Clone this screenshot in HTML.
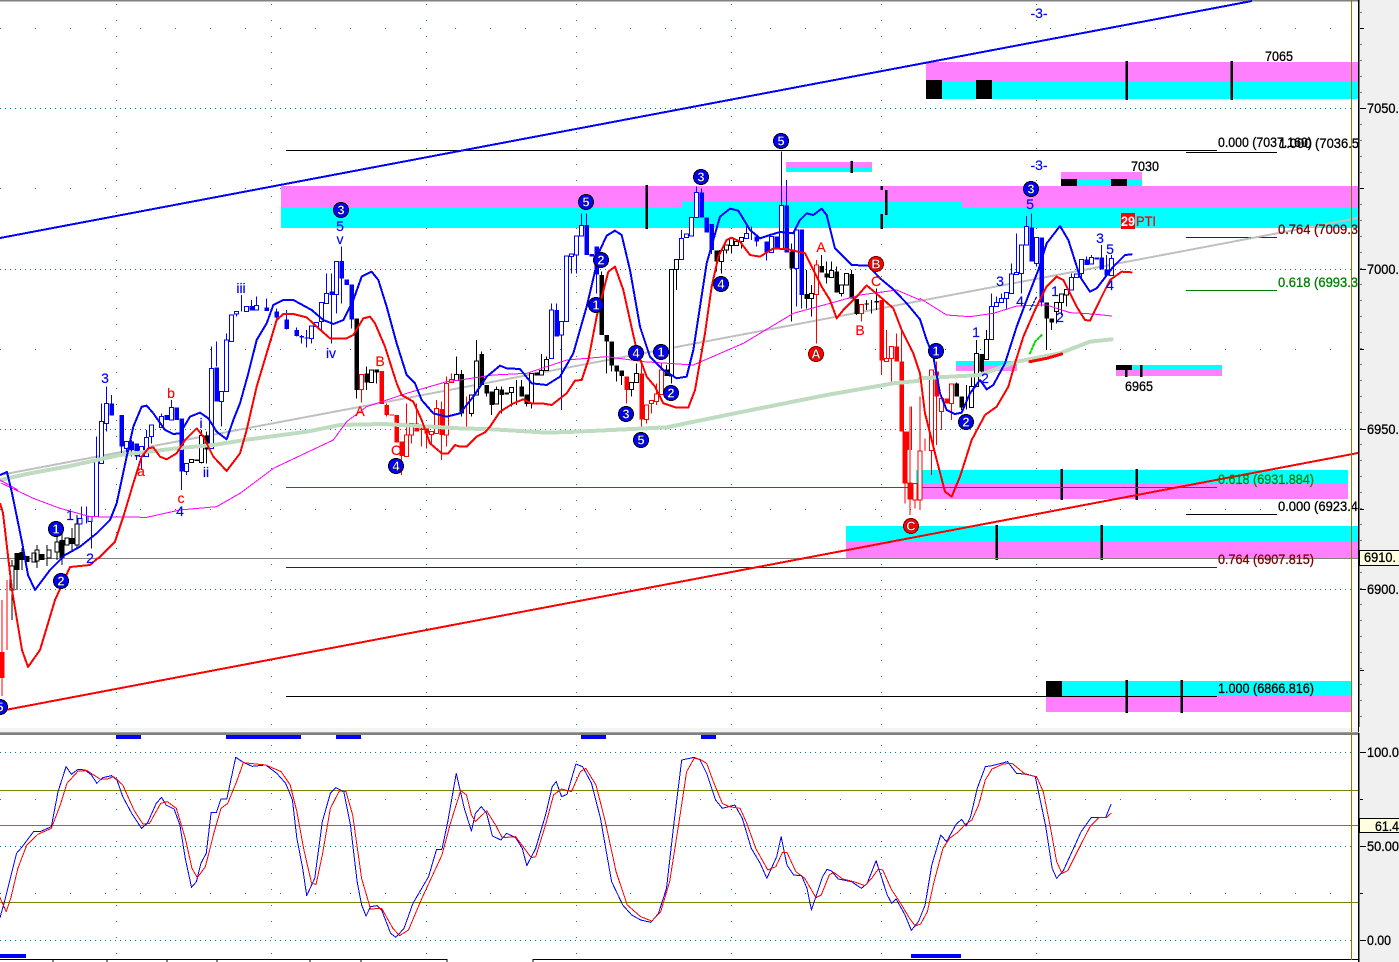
<!DOCTYPE html>
<html><head><meta charset="utf-8"><title>Chart</title>
<style>
html,body{margin:0;padding:0;background:#fff;width:1399px;height:962px;overflow:hidden}
svg{display:block}
text{font-family:"Liberation Sans",sans-serif;font-size:14px}
.k{fill:#000;stroke:#000;stroke-width:.3}
.b{fill:#0000ff;text-anchor:middle;stroke:#0000ff;stroke-width:.15}
.r{fill:#ff0000;text-anchor:middle;stroke:#ff0000;stroke-width:.15}
.cb circle{fill:#0000ff;stroke:#000;stroke-width:1}
.cr circle{fill:#ff0000;stroke:#800000;stroke-width:1}
.cb text,.cr text{fill:#fff;text-anchor:middle;font-weight:bold;font-size:13px;stroke:#000;stroke-width:.35}
.w{fill:none;stroke-width:3}
.f{fill:none;stroke-width:14}
.h{fill:#fff;stroke-width:3}
.c{fill:none;stroke-linejoin:round;stroke-linecap:round;vector-effect:non-scaling-stroke}
</style></head><body>
<svg width="1399" height="962" viewBox="0 0 1399 962" xmlns="http://www.w3.org/2000/svg" shape-rendering="crispEdges">
<rect width="1399" height="962" fill="#fff"/>
<rect width="1399" height="1.5" fill="#808080"/>
<!-- grid -->
<g stroke="#008080" stroke-width="1" fill="none">
<path stroke-dasharray="1 4" d="M0 108.5H1351M0 269.5H1351M0 429.5H1351M0 589.5H1351M0 752.5H1351M0 846.5H1351M0 940.5H1351"/>
<path stroke-dasharray="1 34" d="M0 349.5H1351M0 509.5H1351M0 799.5H1351M0 893.5H1351M0 28.5H1351M0 188.5H1351"/>
<path stroke-dasharray="1 15" d="M116.5 4V730M271.5 4V730M426.5 4V730M576.5 4V730M731.5 4V730M881.5 4V730M1036.5 4V730M116.5 745V958M271.5 745V958M426.5 745V958M576.5 745V958M731.5 745V958M881.5 745V958M1036.5 745V958"/>
</g>
<!-- zones -->
<g>
<rect x="926" y="62" width="432" height="19" fill="#ff80ff"/><rect x="926" y="81" width="432" height="18" fill="#00ffff"/>
<rect x="926" y="80" width="16" height="19" fill="#000"/><rect x="976" y="80" width="16" height="19" fill="#000"/>
<rect x="281" y="186" width="1077" height="42" fill="#00ffff"/>
<rect x="281" y="186" width="401" height="21" fill="#ff80ff"/><rect x="682" y="186" width="280" height="16" fill="#ff80ff"/><rect x="962" y="186" width="396" height="21" fill="#ff80ff"/>
<rect x="786" y="162" width="86" height="5" fill="#ff80ff"/><rect x="786" y="167" width="86" height="5" fill="#00ffff"/>
<rect x="1061" y="172" width="81" height="7" fill="#ff80ff"/><rect x="1061" y="179" width="81" height="7" fill="#00ffff"/>
<rect x="1061" y="179" width="16" height="7" fill="#000"/><rect x="1111" y="179" width="16" height="7" fill="#000"/>
<rect x="956" y="361" width="61" height="5" fill="#00ffff"/><rect x="956" y="366" width="61" height="5" fill="#ff80ff"/>
<rect x="1116" y="365" width="106" height="5" fill="#00ffff"/><rect x="1116" y="370" width="106" height="6" fill="#ff80ff"/><rect x="1116" y="365" width="16" height="5" fill="#000"/>
<rect x="916" y="470" width="432" height="14" fill="#00ffff"/><rect x="916" y="484" width="432" height="15" fill="#ff80ff"/>
<rect x="846" y="526" width="512" height="16" fill="#00ffff"/><rect x="846" y="542" width="512" height="16" fill="#ff80ff"/>
<rect x="1046" y="681" width="305" height="15" fill="#00ffff"/><rect x="1046" y="696" width="305" height="16" fill="#ff80ff"/><rect x="1046" y="681" width="16" height="15" fill="#000"/>
<path stroke="#000" stroke-width="2.500" fill="none" d="M1126.500 61V100M1231.500 61V100M646.500 185V229M881.500 186V190M881.500 214V229M886 190V215M851.500 161V173M1126 365V377M1141 365V377M1061.500 469V500M1136.500 469V500M996.500 525V560M1101.500 525V560M1126.500 680V713M1181.500 680V713"/>
</g>
<!-- horizontal fib lines -->
<g fill="none" stroke-width="1">
<path stroke="#000" d="M286 150.500H1217M1186 152.500H1277M1186 514.500H1277M286 696.500H1217"/>
<path stroke="#800000" d="M1186 237.500H1277M286 567.500H1217"/>
<path stroke="#008000" d="M1186 290.500H1277M286 487.500H1217"/>
<path stroke="#808080" d="M0 558.500H1358"/>
</g>
<!-- channels -->
<path d="M0 238L1252 1" stroke="#0000ff" stroke-width="2" fill="none"/>
<path d="M0 711L1358 453" stroke="#ff0000" stroke-width="2" fill="none"/>
<path d="M0 475L1358 218" stroke="#c0c0c0" stroke-width="2" fill="none"/>
<!-- far-left candles -->
<g>
<path stroke="#000" stroke-width="1" fill="none" d="M12 560V620M22 548V570M37 545V568M47 545V566M57 535V560M62 530V565M72 528V550M77 515V548M17 555V590"/>
<path stroke="#ff0000" stroke-width="1" fill="none" d="M2 600V696M7 580V650"/>
<path stroke="#ff0000" stroke-width="5" fill="none" d="M2 652V678"/>
<path stroke="#000" stroke-width="5" fill="none" d="M17 553V570M22 552V560M27 556V562M42 554V560M62 540V558M72 538V544"/>
<path stroke="#000" stroke-width="1" fill="#fff" d="M10 566h4V590h-4zM32 553h4V562h-4zM35 550h4V561h-4zM47 550h4V558h-4zM55 542h4V552h-4zM65 538h4V545h-4zM75 524h4V545h-4z"/>
</g>
<!-- candles zoom1 -->
<g transform="translate(0 240) scale(.33333)">
<path class="w" stroke="#0000ff" d="M245 800V835M260 800V850M275 845V925M290 590V665M305 490V590M320 440V575M335 465V490M365 620V650M380 625V650M395 600V650M410 650V660M425 650V690M440 570V592M455 590V610M485 520V530M515 480V502M545 695V750M560 695V705M635 320V385M650 305V380M665 485V560M680 280V300M710 230V220M725 165V215M755 180V198M770 170V197M800 175V203M830 205V235M860 210V268M890 262V290M905 285V310M920 270V322M935 295V310M965 230V270M980 100V160M995 100V310M1010 163V220M1025 20V65M1025 115V190M1055 238V265"/>
<path class="f" stroke="#0000ff" d="M335 490V527M365 525V620M395 605V630M410 610V650M500 525V540M530 502V540M545 535V695M650 382V485M755 198V212M800 203V213M830 215V232M860 238V267M890 270V288M905 288V293M920 292V296M995 155V165M1025 63V115M1040 118V135M1055 133V238"/>
<path class="h" stroke="#0000ff" d="M234 835h12V852H234zM264 830h12V845H264zM284 665h12V830H284zM299 545h12V670H299zM314 490h12V550H314zM374 605h12V625H374zM434 592h12V650H434zM419 620h12V650H419zM449 555h12V590H449zM479 530h12V562H479zM509 502h12V540H509zM554 670h12V695H554zM629 385h12V625H629zM659 455h12V485H659zM674 300h12V455H674zM689 225h12V305H689zM704 215h12V222H704zM734 200h12V215H734zM764 197h12V210H764zM929 258h12V295H929zM944 248h12V260H944zM959 187h12V245H959zM974 160h12V190H974zM1004 65h12V163H1004z"/>
<path class="w" stroke="#000" d="M605 570V670M620 575V670M1070 450V475M1100 380V450M1130 388V430M1370 350V403"/>
<path class="f" stroke="#000" d="M590 658V663M620 587V628M1070 235V450M1100 400V428M1130 388V398"/>
<path class="h" stroke="#000" d="M569 658h12V668H569zM599 587h12V667H599zM1109 390h12V428H1109zM1364 403h12V422H1364z"/>
<path class="w" stroke="#f00" d="M1085 448V488M1160 490V530M1205 648V705M1220 490V585M1235 585V610M1250 490V550M1265 560V620M1280 580V625M1295 583V610M1310 480V505M1325 485V660M1340 585V620M1340 410V430M1355 400V418"/>
<path class="f" stroke="#f00" d="M1145 393V492M1160 495V525M1175 523V527M1190 525V607M1205 605V648M1250 550V575M1265 565V570M1280 565V580M1325 507V585"/>
<path class="h" stroke="#f00" d="M1079 403h12V448H1079zM1214 585h12V650H1214zM1229 550h12V585H1229zM1289 575h12V583H1289zM1304 505h12V580H1304zM1334 430h12V585H1334zM1349 418h12V428H1349z"/>
</g>
<!-- candles zoom2 -->
<g transform="translate(460 130) scale(.33333)">
<path class="w" stroke="#000" d="M5 720V860M35 850V860M50 630V693M65 665V672M80 790V800M95 825V855M110 770V778M125 770V850M155 787V830M170 750V825M185 750V770M200 822V830M215 820V835M245 672V722M260 680V688M425 425V440M440 635V730M455 707V725M470 725V755M485 738V765M515 778V800M530 700V730M620 705V718M635 738V760M650 418V480M770 395V425M785 395V430M800 360V370M815 347V370M845 335V355M995 415V575M995 340V365M1040 420V535M1055 465V560M1085 375V408M1100 395V460M1115 395V422M1130 410V424M1145 490V500M1175 420V432M1190 552V555M1220 510V540M1235 510V550M1250 475V540"/>
<path class="f" stroke="#000" d="M5 732V850M65 672V765M80 765V790M95 785V825M125 778V795M140 788V793M185 770V800M200 793V822M230 727V737M425 435V615M440 615V635M455 635V707M470 707V725M485 722V738M620 718V738M770 362V395M995 365V415M1040 492V507M1085 408V428M1100 430V442M1130 424V488M1175 432V505M1190 507V552M1220 520V524M1250 513V517"/>
<path class="h" stroke="#000" d="M29 795h12V850H29zM44 693h12V795H44zM104 778h12V822H104zM149 772h12V787H149zM209 730h12V820H209zM239 722h12V735H239zM254 688h12V722H254zM509 757h12V778H509zM524 730h12V757H524zM629 418h12V738H629zM644 388h12V418H644zM779 362h12V395H779zM794 345h12V360H794zM809 325h12V347H809zM824 335h12V347H824zM839 322h12V335H839zM1049 490h12V505H1049zM1109 422h12V442H1109zM1139 465h12V490H1139zM1154 430h12V465H1154z"/>
<path class="w" stroke="#0000ff" d="M275 520V540M290 520V540M305 615V840M320 430V378M335 380V430M350 375V430M365 250V287M380 250V285M410 433V490M665 300V325M710 170V187M725 175V187M755 360V372M860 285V310M875 290V330M890 335V350M920 368V392M965 65V227M980 150V227M1025 495V535M1010 415V530"/>
<path class="f" stroke="#0000ff" d="M290 540V620M380 285V375M395 372V380M410 350V433M725 187V262M740 262V307M755 282V360M890 320V335M920 335V368M950 320V352M980 227V368M1025 298V495"/>
<path class="h" stroke="#0000ff" d="M269 540h12V685H269zM299 575h12V615H299zM314 378h12V575H314zM329 372h12V380H329zM344 318h12V375H344zM359 287h12V318H359zM659 325h12V388H659zM674 312h12V322H674zM689 262h12V318H689zM704 187h12V262H704zM854 310h12V325H854zM929 320h12V368H929zM959 227h12V355H959zM1004 300h12V415H1004z"/>
<path class="w" stroke="#f00" d="M20 800V900M500 780V820M545 690V730M545 868V895M560 868V880M590 760V792M605 700V720M575 820V850M590 815V825M1070 390V405M1070 493V640M1205 550V575M1265 692V735M1280 600V685M1295 685V765M1310 610V650M1325 600V695M1355 830V960"/>
<path class="f" stroke="#f00" d="M500 740V780M545 730V868M1265 510V692M1310 650V695M1325 695V905M1340 905V960"/>
<path class="h" stroke="#f00" d="M554 825h12V868H554zM569 812h12V820H569zM584 792h12V815H584zM599 720h12V793H599zM1064 405h12V493H1064zM1199 524h12V550H1199zM1274 685h12V695H1274zM1289 650h12V685H1289z"/>
</g>
<!-- candles zoom3 -->
<g transform="translate(880 130) scale(.33333)">
<path class="w" stroke="#f00" d="M75 1060V1120M90 830V1060M90 1108V1155M105 1110V1135M120 800V963M120 1110V1140M135 925V963M155 963V1035M170 695V725M170 800V945M185 845V900M215 820V870"/>
<path class="f" stroke="#f00" d="M75 905V1060M90 1057V1108M170 725V800M200 805V820"/>
<path class="h" stroke="#f00" d="M99 1060h12V1110H99zM114 963h12V1110H114zM149 720h12V962H149zM179 805h12V845H179zM209 762h12V820H209z"/>
<path class="w" stroke="#000" d="M230 758V800M245 833V840M260 765V838M275 735V770M290 630V670M305 725V740M320 600V628M500 565V660M515 578V600M530 545V580M545 517V555M560 495V530"/>
<path class="f" stroke="#000" d="M230 760V800M245 800V833M305 672V725M500 518V565M515 565V578"/>
<path class="h" stroke="#000" d="M269 770h12V833H269zM284 670h12V770H284zM314 628h12V688H314zM524 518h12V545H524zM539 492h12V517H539zM554 478h12V495H554z"/>
<path class="w" stroke="#0000ff" d="M335 490V530M350 500V518M365 490V505M380 505V540M395 400V432M410 310V428M425 430V490M440 258V290M455 250V292M470 400V410M485 518V530M575 430V443M605 430V445M620 380V388M635 375V382M665 345V383M680 375V418M695 375V385"/>
<path class="f" stroke="#0000ff" d="M455 292V395M485 322V518M620 388V405M650 383V389M665 383V418M680 418V437"/>
<path class="h" stroke="#0000ff" d="M329 530h12V628H329zM344 518h12V530H344zM359 505h12V518H359zM374 488h12V505H374zM389 432h12V490H389zM404 428h12V433H404zM419 345h12V430H419zM434 290h12V345H434zM464 322h12V400H464zM569 443h12V480H569zM584 432h12V443H584zM599 388h12V430H599zM629 382h12V402H629zM689 385h12V437H689z"/>
</g>
<!-- curves -->
<g fill="none">
<g transform="translate(0 240) scale(.33333)">
<polyline class="c" stroke="#c0dcc0" stroke-width="4" points="0,720 90,700 200,680 360,645 530,625 640,615 735,600 920,575 1020,555 1150,552 1380,565"/>
<polyline class="c" stroke="#ff00ff" stroke-width="1" points="5,730 100,775 180,805 270,830 440,832 540,810 650,800 720,760 820,685 1000,600 1040,545 1100,500 1220,460 1340,425 1380,420"/>
</g>
<g transform="translate(460 130) scale(.33333)">
<polyline class="c" stroke="#c0dcc0" stroke-width="4" points="0,895 100,898 260,908 350,905 620,892 800,855 1100,795 1300,760 1380,752"/>
<polyline class="c" stroke="#ff00ff" stroke-width="1" points="0,750 100,735 200,730 320,690 440,680 550,695 700,705 850,640 1000,550 1110,520 1200,495 1310,480 1380,510"/>
</g>
<g transform="translate(880 130) scale(.33333)">
<polyline class="c" stroke="#c0dcc0" stroke-width="4" points="120,745 300,735 410,695 540,670 630,635 695,628"/>
<polyline class="c" stroke="#ff00ff" stroke-width="1" points="120,505 200,555 270,560 340,550 410,528 500,525 570,548 640,552 695,558"/>
</g>
<path d="M0 480L18 490" stroke="#ff00ff" stroke-width="1"/>
<polyline stroke="#0000ff" stroke-width="2" stroke-linejoin="round" points="0,475 7,472 12,493 22,542 28,575 35,590 50,570 65,555"/>
<polyline stroke="#ff0000" stroke-width="2" stroke-linejoin="round" points="0,503 3,513 12,590 22,650 28,667 40,650 55,600 70,567 90,565 98,558"/>
<g transform="translate(0 240) scale(.33333)">
<polyline class="c" stroke="#0000ff" stroke-width="2" points="195,945 240,920 290,880 330,840 350,790 380,650 400,560 425,500 440,497 460,520 495,570 520,582 540,580 570,530 600,518 625,535 650,575 680,598 700,540 720,490 745,400 770,300 800,250 820,195 850,180 880,180 935,210 970,240 1000,252 1030,240 1060,180 1085,110 1115,95 1135,120 1160,200 1190,310 1220,405 1245,430 1265,480 1300,520 1340,530 1380,520"/>
<polyline class="c" stroke="#ff0000" stroke-width="2" points="295,955 345,905 370,830 400,730 425,650 445,625 460,622 480,650 500,658 530,640 555,600 590,565 610,590 640,650 680,693 720,640 740,570 770,440 800,340 830,240 850,222 880,222 920,232 950,260 990,295 1040,295 1060,285 1090,235 1110,230 1125,250 1155,320 1190,430 1205,465 1240,485 1265,540 1290,610 1325,640 1345,640 1365,615 1380,620"/>
</g>
<g transform="translate(460 130) scale(.33333)">
<polyline class="c" stroke="#0000ff" stroke-width="2" points="0,850 40,800 80,740 120,707 140,715 180,717 215,760 260,765 300,740 340,670 380,530 420,360 440,317 465,302 485,315 510,420 540,590 570,680 610,720 650,745 680,740 700,660 740,400 780,260 810,236 835,242 870,300 900,325 930,315 960,306 1000,310 1020,270 1040,250 1060,255 1085,236 1100,255 1125,355 1175,405 1225,407 1260,445 1300,478 1340,520 1380,568"/>
<polyline class="c" stroke="#ff0000" stroke-width="2" points="0,950 20,950 50,920 75,907 90,890 120,845 160,820 190,808 215,820 245,820 275,825 320,790 345,752 365,750 385,690 410,560 445,425 465,410 490,480 530,660 560,740 585,770 610,820 650,833 685,833 705,780 735,610 755,470 775,380 800,330 815,323 840,335 870,375 900,380 940,355 985,358 1035,370 1050,400 1085,470 1110,510 1130,565 1150,540 1190,500 1220,466 1260,500 1300,535 1325,600 1360,670 1380,730"/>
</g>
<g transform="translate(880 130) scale(.33333)">
<polyline class="c" stroke="#0000ff" stroke-width="2" points="120,568 140,630 160,680 180,790 200,840 225,852 245,848 270,790 300,750 320,778 340,765 375,700 410,590 440,510 475,420 500,340 540,288 565,330 600,440 630,485 650,475 700,410 735,375 755,373"/>
<polyline class="c" stroke="#ff0000" stroke-width="2" points="120,730 135,850 165,970 195,1085 215,1100 240,1040 275,930 315,855 350,830 385,770 405,700 430,620 465,540 500,470 530,440 550,450 590,530 615,570 630,572 660,510 690,450 725,425 755,427"/>
<polyline class="c" stroke="#00e000" stroke-width="2" stroke-dasharray="2 2" points="450,670 465,635 485,615"/>
<polyline class="c" stroke="#ff0000" stroke-width="3" stroke-dasharray="1 1" points="450,695 500,685 545,672"/>
<polyline class="c" stroke="#0000ff" stroke-width="1.500" stroke-dasharray="2 2" points="450,540 470,500"/>
</g>
</g>
<!-- blue circles -->
<g class="cb">
<circle cx="56" cy="529" r="7.500"/><text x="56" y="533.500">1</text>
<circle cx="61" cy="581" r="7.500"/><text x="61" y="585.500">2</text>
<circle cx="341" cy="210" r="7.500"/><text x="341" y="214.500">3</text>
<circle cx="586" cy="202" r="7.500"/><text x="586" y="206.500">5</text>
<circle cx="601" cy="260" r="7.500"/><text x="601" y="264.500">2</text>
<circle cx="596" cy="305" r="7.500"/><text x="596" y="309.500">1</text>
<circle cx="636" cy="353" r="7.500"/><text x="636" y="357.500">4</text>
<circle cx="661" cy="352" r="7.500"/><text x="661" y="356.500">1</text>
<circle cx="626" cy="414" r="7.500"/><text x="626" y="418.500">3</text>
<circle cx="671" cy="393" r="7.500"/><text x="671" y="397.500">2</text>
<circle cx="641" cy="440" r="7.500"/><text x="641" y="444.500">5</text>
<circle cx="701" cy="177" r="7.500"/><text x="701" y="181.500">3</text>
<circle cx="721" cy="284" r="7.500"/><text x="721" y="288.500">4</text>
<circle cx="781" cy="141" r="7.500"/><text x="781" y="145.500">5</text>
<circle cx="396" cy="466" r="7.500"/><text x="396" y="470.500">4</text>
<circle cx="936" cy="351" r="7.500"/><text x="936" y="355.500">1</text>
<circle cx="966" cy="422" r="7.500"/><text x="966" y="426.500">2</text>
<circle cx="1031" cy="189" r="7.500"/><text x="1031" y="193.500">3</text>
<circle cx="0" cy="707" r="7.500"/><text x="0" y="711.500">5</text>
</g>
<g class="cr">
<circle cx="816" cy="354" r="7.500"/><text x="816" y="358.500">A</text>
<circle cx="876" cy="264" r="7.500"/><text x="876" y="268.500">B</text>
<circle cx="911" cy="526" r="7.500"/><text x="911" y="530.500">C</text>
</g>
<!-- wave labels -->
<g class="b">
<text x="1039" y="18">-3-</text><text x="1039" y="170">-3-</text>
<text x="340" y="231">5</text><text x="340" y="244">v</text><text x="241" y="293">iii</text><text x="331" y="358">iv</text>
<text x="206" y="477">ii</text><text x="201" y="428">i</text><text x="105" y="383">3</text><text x="70" y="520">1</text><text x="90" y="563">2</text><text x="180" y="516">4</text>
<text x="976" y="337">1</text><text x="1000" y="286">3</text><text x="1020" y="306">4</text><text x="1030" y="209">5</text><text x="985" y="383">2</text>
<text x="1100" y="243">3</text><text x="1110" y="254">5</text><text x="1110" y="290">4</text><text x="1055" y="296">1</text><text x="1060" y="322">2</text>
</g>
<g class="r">
<text x="141" y="476">a</text><text x="171" y="398">b</text><text x="181" y="503">c</text>
<text x="360" y="416">A</text><text x="380" y="366">B</text><text x="396" y="455">C</text>
<text x="821" y="252">A</text><text x="876" y="286">C</text><text x="860" y="335">B</text>
</g>
<rect x="1121" y="213" width="14" height="16" fill="#ff0000"/>
<text x="1121" y="226" fill="#fff" font-weight="bold" textLength="14" lengthAdjust="spacingAndGlyphs">29</text>
<text x="1136" y="226" fill="#ff0000" stroke="#ff0000" stroke-width=".25" textLength="20" lengthAdjust="spacingAndGlyphs">PTI</text>
<!-- fib text -->
<text class="k" x="1265" y="61" textLength="28" lengthAdjust="spacingAndGlyphs">7065</text>
<text class="k" x="1131" y="171" textLength="28" lengthAdjust="spacingAndGlyphs">7030</text>
<text class="k" x="1125" y="391" textLength="28" lengthAdjust="spacingAndGlyphs">6965</text>
<text class="k" x="1218" y="147" textLength="94" lengthAdjust="spacingAndGlyphs">0.000 (7037.160)</text>
<text class="k" x="1279" y="148" textLength="80" lengthAdjust="spacingAndGlyphs">1.000 (7036.5</text>
<text x="1278" y="234" fill="#800000" stroke="#800000" stroke-width=".3" textLength="80" lengthAdjust="spacingAndGlyphs">0.764 (7009.3</text>
<text x="1278" y="287" fill="#008000" stroke="#008000" stroke-width=".3" textLength="80" lengthAdjust="spacingAndGlyphs">0.618 (6993.3</text>
<text x="1218" y="484" fill="#008000" stroke="#008000" stroke-width=".3" textLength="96" lengthAdjust="spacingAndGlyphs">0.618 (6931.884)</text>
<text class="k" x="1278" y="511" textLength="80" lengthAdjust="spacingAndGlyphs">0.000 (6923.4</text>
<text x="1218" y="564" fill="#800000" stroke="#800000" stroke-width=".3" textLength="96" lengthAdjust="spacingAndGlyphs">0.764 (6907.815)</text>
<text class="k" x="1218" y="693" textLength="96" lengthAdjust="spacingAndGlyphs">1.000 (6866.816)</text>
<!-- separator -->
<rect x="0" y="728" width="1358" height="5" fill="#f4f4f4"/>
<rect x="0" y="733" width="1358" height="2" fill="#808080"/>
<!-- stoch bars -->
<path stroke="#0000ff" stroke-width="4" fill="none" d="M116 737H141M226 737H301M336 737H361M581 737H606M701 737H716M0 956H26M911 956H961"/>
<!-- olive lines -->
<path stroke="#808000" stroke-width="1" fill="none" d="M0 790.500H1358M0 825.500H1358M0 902.500H1358"/>
<!-- stoch -->
<g fill="none">
<g transform="translate(0 725) scale(.44643 .33333)">
<polyline class="c" stroke="#0000ff" stroke-width="1" points="0,578 10,530 37,385 50,365 75,320 90,320 115,305 130,200 148,125 160,148 175,133 190,135 205,150 217,175 230,158 250,152 262,165 275,215 295,265 317,310 330,295 350,235 362,217 372,240 390,252 403,300 415,400 429,487 440,470 450,415 462,385 473,262 485,262 495,222 508,222 528,97 545,112 565,124 595,120 620,145 640,175 655,225 665,340 678,430 687,512 705,460 722,290 740,205 752,188 770,200 785,300 800,470 810,540 820,573 830,545 845,542 855,555 875,625 887,637 905,610 925,535 960,455 978,373 990,373 1003,290 1022,145 1040,250 1056,318 1065,265 1078,245 1090,265 1103,333 1122,345 1135,325 1155,338 1170,370 1180,422 1200,370 1222,270 1237,185 1246,170 1258,215 1270,208 1290,117 1305,125 1325,175 1345,280 1370,470 1395,540 1415,570 1435,585 1458,592 1475,565 1493,490 1510,290 1527,105 1555,97 1568,105"/>
<polyline class="c" stroke="#ff0000" stroke-width="1" points="0,518 14,560 25,515 40,430 60,360 85,328 115,310 135,240 150,175 175,138 195,137 225,163 240,162 255,155 275,180 300,255 320,297 335,295 360,235 375,230 395,250 415,340 430,430 442,458 460,425 480,320 495,250 510,235 530,170 545,113 595,120 630,140 650,180 665,260 680,370 698,475 708,478 722,390 740,250 760,198 775,200 790,270 810,460 830,552 855,550 880,610 895,632 915,615 945,520 990,390 1010,290 1032,197 1045,210 1056,270 1065,290 1090,257 1110,300 1125,338 1155,335 1190,398 1200,395 1222,300 1240,210 1258,192 1280,200 1300,140 1312,130 1335,180 1355,285 1380,440 1405,540 1435,575 1460,588 1480,560 1500,470 1520,300 1538,140 1555,100 1568,103"/>
</g>
<g transform="translate(700 725) scale(.44579 .33333)">
<polyline class="c" stroke="#0000ff" stroke-width="1" points="0,105 15,145 35,225 50,250 78,240 95,280 115,370 135,415 150,460 172,395 182,335 195,420 210,450 228,452 240,490 250,555 275,455 285,433 295,438 310,462 340,470 362,490 375,475 395,407 420,510 430,535 440,522 460,570 474,616 490,590 505,540 520,420 540,330 553,350 575,297 587,283 597,303 607,275 622,190 640,125 655,122 690,110 710,145 735,148 752,155 775,300 790,430 800,460 815,437 855,320 878,277 910,277 922,238"/>
<polyline class="c" stroke="#ff0000" stroke-width="1" points="0,103 15,115 30,170 50,235 65,245 90,250 105,295 125,370 152,435 170,425 185,382 195,382 215,440 235,460 260,518 272,510 290,450 300,442 320,462 345,470 370,482 385,460 400,432 410,435 430,495 450,535 470,580 483,603 495,597 510,560 525,470 545,370 560,340 580,320 595,298 610,285 625,240 640,165 655,132 680,117 700,115 730,148 755,155 770,200 785,300 800,410 812,445 825,437 850,370 875,305 895,277 912,277 922,265"/>
</g>
</g>
<!-- bottom time axis -->
<path stroke="#000" stroke-width="1" fill="none" d="M0 959.500H447M533 959.500H1358M53 959V962M107 959V962M167 959V962M217 959V962M310 959V962M361 959V962M447 959V962M533 959V962"/>
<!-- right axis -->
<rect x="1359" y="0" width="40" height="962" fill="#f0f0f0"/>
<rect x="1351" y="0" width="1" height="960" fill="#808000"/>
<rect x="1358" y="0" width="1.500" height="962" fill="#000"/>
<rect x="0" y="732" width="1399" height="1" fill="#a0a0a0"/>
<rect x="1359" y="727" width="40" height="6" fill="#f0f0f0"/>
<path stroke="#000" stroke-width="1" fill="none" stroke-dasharray="1 15" d="M1361 12V730"/>
<path stroke="#000" stroke-width="1" fill="none" d="M1360 28.500h4M1360 188.500h4M1360 349.500h4M1360 509.500h4M1360 670.500h4M1360 108.500h6M1360 269.500h6M1360 429.500h6M1360 589.500h6M1360 752.500h6M1360 846.500h6M1360 940.500h6M1360 799.500h3M1360 893.500h3"/>
<g class="k">
<text x="1367" y="113" textLength="32" lengthAdjust="spacingAndGlyphs">7050.</text>
<text x="1367" y="274" textLength="32" lengthAdjust="spacingAndGlyphs">7000.</text>
<text x="1367" y="434" textLength="32" lengthAdjust="spacingAndGlyphs">6950.</text>
<text x="1367" y="594" textLength="32" lengthAdjust="spacingAndGlyphs">6900.</text>
<text x="1367" y="757" textLength="32" lengthAdjust="spacingAndGlyphs">100.0</text>
<text x="1367" y="851" textLength="32" lengthAdjust="spacingAndGlyphs">50.00</text>
<text x="1367" y="945" textLength="24" lengthAdjust="spacingAndGlyphs">0.00</text>
</g>
<rect x="1359.500" y="550.500" width="41" height="15" fill="#ffffe0" stroke="#000"/>
<text class="k" x="1364" y="562" textLength="32" lengthAdjust="spacingAndGlyphs">6910.</text>
<rect x="1359.500" y="818.500" width="41" height="14" fill="#ffffe0" stroke="#000"/>
<text class="k" x="1375" y="831" textLength="24" lengthAdjust="spacingAndGlyphs">61.4</text>
</svg>
</body></html>
